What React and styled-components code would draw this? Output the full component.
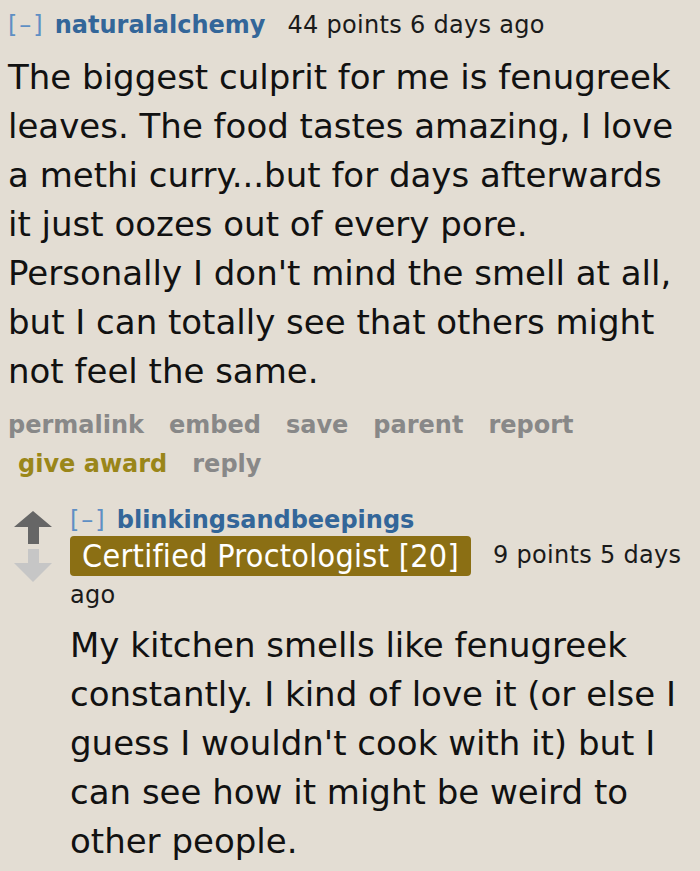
import React from 'react';
import styled, { createGlobalStyle } from 'styled-components';

const BG = '#e3ddd3';
const AUTHOR_BLUE = '#336699';
const EXPAND_BLUE = '#5f8fc4';
const GREY = '#888888';
const GOLD = '#9a8619';

const GlobalStyle = createGlobalStyle`
	html, body {
		margin: 0;
		padding: 0;
		background: ${BG};
	}
	body {
		font-family: "DejaVu Sans", Verdana, sans-serif;
		color: #111;
	}
`;

const Page = styled.div`
	width: 700px;
	height: 871px;
	overflow: hidden;
	padding: 8px 0 0 8px;
	box-sizing: border-box;
`;

const Comment = styled.div`
	display: flex;
	flex-direction: column;
`;

const Tagline = styled.div`
	font-size: 24px;
	line-height: 34px;
	letter-spacing: 0.3px;
	color: #1a1a1a;
`;

const Expand = styled.span`
	color: ${EXPAND_BLUE};
	letter-spacing: 2px;
	margin-right: 10px;
`;

const Author = styled.span`
	color: ${AUTHOR_BLUE};
	font-weight: bold;
	letter-spacing: 0;
	margin-right: ${p => p.$gap || 0}px;
`;

const Body = styled.p`
	margin: ${p => p.$top || 0}px 0 0;
	font-size: 34px;
	line-height: 49px;
	color: #111;
	padding-right: ${p => p.$right || 0}px;
`;

const Actions = styled.ul`
	list-style: none;
	margin: 12px 0 0;
	padding: 0;
	display: flex;
	flex-wrap: wrap;
	column-gap: 25px;
	row-gap: 5px;
	width: 600px;
`;

const Action = styled.li`
	font-size: 24px;
	line-height: 34px;
	font-weight: bold;
	color: ${p => (p.$gold ? GOLD : GREY)};
	padding-left: ${p => (p.$indent ? 10 : 0)}px;
`;

const Child = styled.div`
	display: flex;
	margin-top: 23px;
`;

const Votes = styled.div`
	width: 62px;
	display: flex;
	flex-direction: column;
	align-items: flex-start;
	padding: 7px 0 0 6px;
	box-sizing: border-box;
	gap: 5px;
`;

const ChildMain = styled.div`
	flex: 1;
	display: flex;
	flex-direction: column;
`;

const ChildAuthor = styled.div`
	font-size: 24px;
	line-height: 32px;
`;

const ChildTag = styled.div`
	font-size: 24px;
	line-height: 38px;
	letter-spacing: 0.3px;
	color: #1a1a1a;
`;

const Flair = styled.span`
	display: inline-block;
	vertical-align: top;
	background: #8b6f14;
	color: #fff;
	font-family: "DejaVu Sans Condensed", "DejaVu Sans", sans-serif;
	font-stretch: condensed;
	font-size: 32px;
	line-height: 37px;
	letter-spacing: 0.3px;
	padding: 2px 12px 1px;
	border-radius: 4px;
	margin-right: 22px;
`;

function Arrow({ up, color }) {
	return (
		<svg width="38" height="33" viewBox="0 0 38 33">
			{up ? (
				<path d="M19 0 L38 16 L25 16 L25 33 L14 33 L14 16 L0 16 Z" fill={color} />
			) : (
				<path d="M14 0 L25 0 L25 14 L38 14 L19 33 L0 14 L14 14 Z" fill={color} />
			)}
		</svg>
	);
}

export default function App() {
	return (
		<Page>
			<GlobalStyle />
			<Comment>
				<Tagline>
					<Expand>[–]</Expand>
					<Author $gap={22}>naturalalchemy</Author>
					44 points 6 days ago
				</Tagline>
				<Body $top={11} $right={10}>
					The biggest culprit for me is fenugreek leaves. The food tastes amazing, I love a methi curry...but for days afterwards it just oozes out of every pore. Personally I don't mind the smell at all, but I can totally see that others might not feel the same.
				</Body>
				<Actions>
					<Action>permalink</Action>
					<Action>embed</Action>
					<Action>save</Action>
					<Action>parent</Action>
					<Action>report</Action>
					<Action $gold $indent>give award</Action>
					<Action>reply</Action>
				</Actions>
			</Comment>
			<Child>
				<Votes>
					<Arrow up color="#666666" />
					<Arrow color="#c6c6c6" />
				</Votes>
				<ChildMain>
					<ChildAuthor>
						<Expand>[–]</Expand>
						<Author>blinkingsandbeepings</Author>
					</ChildAuthor>
					<ChildTag>
						<Flair>Certified Proctologist [20]</Flair>
						9 points 5 days ago
					</ChildTag>
					<Body $top={7}>
						My kitchen smells like fenugreek constantly. I kind of love it (or else I guess I wouldn't cook with it) but I can see how it might be weird to other people.
					</Body>
				</ChildMain>
			</Child>
		</Page>
	);
}
